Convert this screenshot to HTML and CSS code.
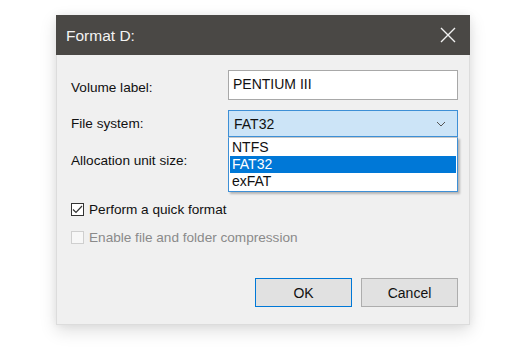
FILE: index.html
```html
<!DOCTYPE html>
<html>
<head>
<meta charset="utf-8">
<link rel="stylesheet" href="styles.css">
</head>
<body>
<div class="dialog">
  <div class="titlebar">
    <span class="title">Format D:</span>
    <svg class="close" width="16" height="16" viewBox="0 0 16 16"><path d="M1 1 L15 15 M15 1 L1 15" stroke="#f2f2f2" stroke-width="1.4" fill="none"/></svg>
  </div>
  <div class="content">
    <div class="row row-vol">
      <span class="label">Volume label:</span>
      <div class="textbox">PENTIUM III</div>
    </div>
    <div class="row row-fs">
      <span class="label">File system:</span>
      <div class="combo-wrap">
        <div class="combo">
          <span>FAT32</span>
          <svg width="10" height="6" viewBox="0 0 10 6"><path d="M1 1 L5 5 L9 1" stroke="#555" stroke-width="1" fill="none"/></svg>
        </div>
        <ul class="listbox">
          <li>NTFS</li>
          <li class="selected">FAT32</li>
          <li>exFAT</li>
        </ul>
      </div>
    </div>
    <div class="row row-alloc">
      <span class="label">Allocation unit size:</span>
    </div>
    <div class="checks">
      <label class="check">
        <span class="box"><svg width="11" height="9" viewBox="0 0 11 9"><path d="M1 4.5 L4 7.5 L10 1" stroke="#333" stroke-width="1.2" fill="none"/></svg></span>
        <span>Perform a quick format</span>
      </label>
      <label class="check disabled">
        <span class="box"></span>
        <span>Enable file and folder compression</span>
      </label>
    </div>
    <div class="buttons">
      <div class="btn default">OK</div>
      <div class="btn">Cancel</div>
    </div>
  </div>
</div>
</body>
</html>
```
FILE: styles.css
```css
html, body {
  margin: 0;
  padding: 0;
  background: #ffffff;
}
body {
  width: 512px;
  height: 354px;
  overflow: hidden;
  font-family: "Liberation Sans", Arial, sans-serif;
  font-size: 13.6px;
  color: #111;
}
.dialog {
  margin: 15px 0 0 56px;
  width: 414px;
  height: 310px;
  box-sizing: border-box;
  background: #f0f0f0;
  border: 1px solid #dcdcdc;
  border-top: none;
  box-shadow: 0 6px 16px rgba(0,0,0,0.13), 0 0 8px rgba(0,0,0,0.06);
  display: flex;
  flex-direction: column;
}
.titlebar {
  height: 40px;
  margin: 0 -1px;
  background: #4a4845;
  display: flex;
  align-items: center;
  justify-content: space-between;
  padding: 0 14px 0 10px;
}
.title {
  color: #f3f3f3;
  font-size: 15.5px;
  position: relative;
  top: 1px;
}
.close {
  display: block;
}
.content {
  flex: 1;
  padding: 15px 11px 0 13px;
  display: flex;
  flex-direction: column;
}
.row {
  display: grid;
  grid-template-columns: 158px 230px;
  align-items: center;
}
.row-vol { height: 30px; }
.row-fs { height: 27px; margin-top: 10px; }
.row-alloc { height: 24px; margin-top: 11px; }
.label {
  padding-left: 1px;
}
.row-vol .label { position: relative; top: 2px; }
.textbox {
  height: 30px;
  box-sizing: border-box;
  border: 1px solid #a8a8a8;
  background: #ffffff;
  padding: 0 0 0 4px;
  line-height: 26px;
  font-size: 14px;
}
.combo-wrap {
  position: relative;
  height: 27px;
}
.combo {
  height: 27px;
  box-sizing: border-box;
  border: 1px solid #3d8fd6;
  background: #cce4f7;
  display: flex;
  align-items: center;
  justify-content: space-between;
  padding: 0 11px 0 5px;
  font-size: 14px;
}
.listbox {
  position: absolute;
  left: 0;
  top: 27px;
  width: 230px;
  margin: 0;
  padding: 1px 0;
  list-style: none;
  box-sizing: border-box;
  background: #ffffff;
  border: 1px solid #3d8fd6;
  border-top: 1px solid #c8c8c8;
  box-shadow: 2px 2px 2px rgba(0,0,0,0.25);
  font-size: 14px;
}
.listbox li {
  height: 17px;
  line-height: 17px;
  padding-left: 2px;
  margin: 0 1px;
}
.listbox li.selected {
  background: #0078d7;
  color: #ffffff;
}
.checks {
  margin-top: 30px;
  display: flex;
  flex-direction: column;
  gap: 14px;
}
.check {
  display: flex;
  align-items: center;
  gap: 5px;
  height: 14px;
  padding-left: 1px;
}
.check .box {
  width: 13px;
  height: 13px;
  box-sizing: border-box;
  border: 1px solid #333;
  background: #fff;
  display: flex;
  align-items: center;
  justify-content: center;
}
.check.disabled {
  color: #8a8a8a;
}
.check.disabled .box {
  border-color: #cfcfcf;
  background: #f7f7f7;
}
.buttons {
  margin-top: 34px;
  display: flex;
  justify-content: flex-end;
  gap: 9px;
}
.btn {
  width: 97px;
  height: 29px;
  box-sizing: border-box;
  border: 1px solid #adadad;
  background: #e1e1e1;
  display: flex;
  align-items: center;
  justify-content: center;
  font-size: 14px;
}
.btn.default {
  border: 1px solid #0078d7;
  box-shadow: inset 0 0 0 1px #e1e1e1;
}
```
